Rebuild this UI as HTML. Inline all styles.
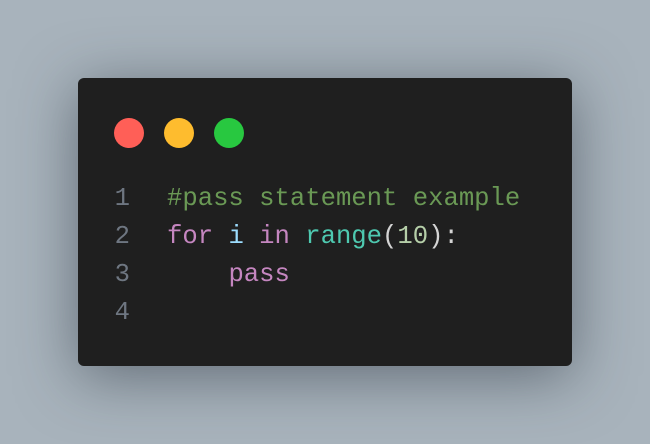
<!DOCTYPE html>
<html><head><style>
body{margin:0;width:650px;height:444px;background:#a8b3bc;overflow:hidden;position:relative}
.w{position:absolute;left:78px;top:78px;width:494px;height:288px;background:#1f1f1f;border-radius:6px;box-shadow:0 10px 60px rgba(40,50,60,.55)}
.c{position:absolute;top:40px;width:30px;height:30px;border-radius:50%}
.code{position:absolute;left:0;top:102px;font-family:"Liberation Mono",monospace;font-size:25.6px;line-height:38px;white-space:pre}
.n{display:inline-block;width:52px;text-align:right;color:#6e7681;margin-right:37px}
.cm{color:#6a9955}.k{color:#c586c0}.v{color:#9cdcfe}.f{color:#4ec9b0}.num{color:#b5cea8}.p{color:#d4d4d4}
</style></head><body>
<div class="w">
<div class="c" style="left:36px;background:#ff5f57"></div>
<div class="c" style="left:86px;background:#febc2e"></div>
<div class="c" style="left:136px;background:#28c840"></div>
<div class="code"><span class="n">1</span><span class="cm">#pass statement example</span>
<span class="n">2</span><span class="k">for</span> <span class="v">i</span> <span class="k">in</span> <span class="f">range</span><span class="p">(</span><span class="num">10</span><span class="p">):</span>
<span class="n">3</span>    <span class="k">pass</span>
<span class="n">4</span></div>
</div>
</body></html>
